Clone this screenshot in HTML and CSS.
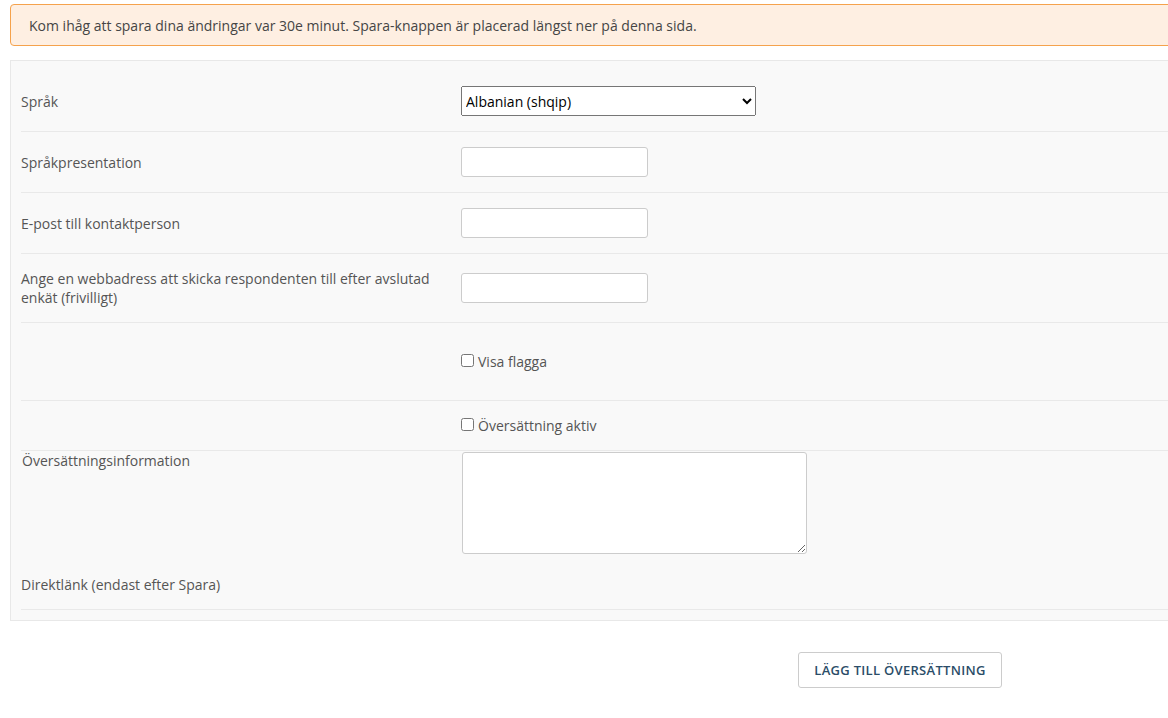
FILE: index.html
```html
<!DOCTYPE html>
<html lang="sv">
<head>
<meta charset="utf-8">
<title>Översättning</title>
<link rel="stylesheet" href="styles.css">
</head>
<body>
<div class="page">
  <div class="alert">Kom ihåg att spara dina ändringar var 30e minut. Spara-knappen är placerad längst ner på denna sida.</div>

  <div class="panel">
    <div class="row">
      <div class="label">Språk</div>
      <div class="control">
        <select class="select">
          <option>Albanian (shqip)</option>
        </select>
      </div>
    </div>

    <div class="row">
      <div class="label">Språkpresentation</div>
      <div class="control"><input class="input" type="text"></div>
    </div>

    <div class="row">
      <div class="label">E-post till kontaktperson</div>
      <div class="control"><input class="input" type="text"></div>
    </div>

    <div class="row">
      <div class="label">Ange en webbadress att skicka respondenten till efter avslutad enkät (frivilligt)</div>
      <div class="control"><input class="input" type="text"></div>
    </div>

    <div class="row row-check-tall">
      <div class="label"></div>
      <div class="control"><label class="check"><input type="checkbox">Visa flagga</label></div>
    </div>

    <div class="row row-check">
      <div class="label"></div>
      <div class="control"><label class="check"><input type="checkbox">Översättning aktiv</label></div>
    </div>

    <div class="row row-textarea">
      <div class="label">Översättningsinformation</div>
      <div class="control"><textarea class="textarea"></textarea></div>
    </div>

    <div class="row row-link">
      <div class="label">Direktlänk (endast efter Spara)</div>
      <div class="control"></div>
    </div>
  </div>

  <div class="actions">
    <button class="btn" type="button">Lägg till översättning</button>
  </div>
</div>
</body>
</html>
```

FILE: styles.css
```css
html, body {
  margin: 0;
  padding: 0;
  overflow: hidden;
  background: #ffffff;
}

body {
  font-family: "Open Sans", "Noto Sans", "Liberation Sans", sans-serif;
  font-size: 14px;
  line-height: 19px;
  color: #555555;
}

.page {
  width: 1240px;
  padding: 4px 0 0 10px;
}

.alert {
  box-sizing: border-box;
  height: 42px;
  padding: 11px 18px;
  background: #feefe2;
  border: 1px solid #f5a24c;
  border-radius: 4px;
  color: #454545;
}

.panel {
  margin-top: 14px;
  background: #f9f9f9;
  border: 1px solid #e8e8e8;
  padding: 10px;
}

.row {
  display: flex;
  align-items: center;
  padding: 15px 0;
  border-bottom: 1px solid #e9e9e9;
}

.label {
  width: 440px;
  flex: none;
  padding-right: 10px;
  box-sizing: border-box;
}

.control {
  flex: 1;
  display: flex;
  align-items: center;
}

.select {
  width: 295px;
  height: 30px;
  font-family: "Open Sans", "Noto Sans", sans-serif;
  font-size: 14px;
  color: #000;
  margin: 0;
}

.input {
  width: 187px;
  height: 30px;
  box-sizing: border-box;
  border: 1px solid #cccccc;
  border-radius: 3px;
  background: #fff;
  margin: 0;
  padding: 4px 6px;
  font-family: inherit;
  font-size: 14px;
}

.row-check-tall {
  padding: 28px 0 29px;
}

.row-check {
  padding: 14px 0 15px;
}

.check {
  display: flex;
  align-items: center;
  height: 20px;
  color: #555;
}

.check input {
  width: 13px;
  height: 13px;
  margin: 0 4px 0 0;
  position: relative;
  top: -1px;
}

.row-textarea {
  align-items: flex-start;
  padding: 0 0 0 1px;
  border-bottom: none;
}

.textarea {
  width: 345px;
  height: 102px;
  box-sizing: border-box;
  border: 1px solid #cccccc;
  border-radius: 3px;
  background: #fff;
  margin: 1px 0 0 0;
  resize: vertical;
  font-family: inherit;
}

.row-link {
  padding: 21px 0 15px;
}

.actions {
  display: flex;
  padding: 31px 0 0 788px;
}

.btn {
  height: 36px;
  width: 204px;
  box-sizing: border-box;
  background: #fff;
  border: 1px solid #cccccc;
  border-radius: 3px;
  font-family: "Open Sans", "Noto Sans", sans-serif;
  font-size: 13px;
  font-weight: 600;
  letter-spacing: 0.3px;
  text-transform: uppercase;
  color: #2b4d68;
  padding: 0;
}
```
